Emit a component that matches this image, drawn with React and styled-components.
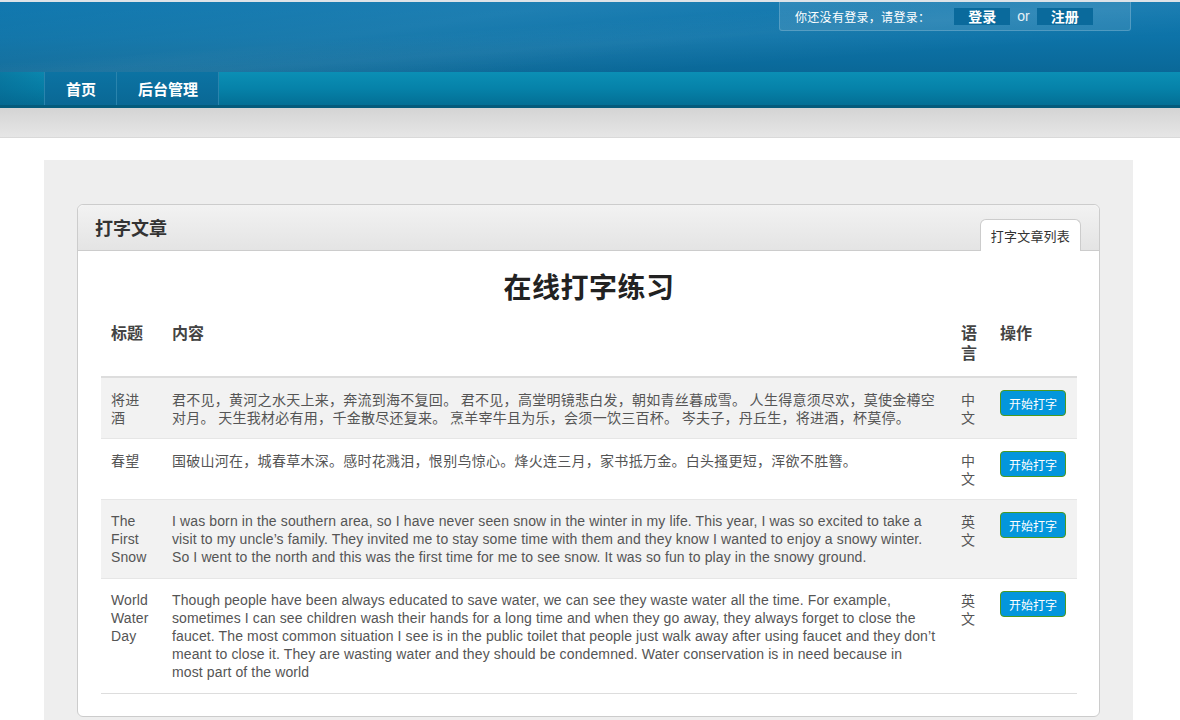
import styled, { createGlobalStyle } from "styled-components";

const GlobalStyle = createGlobalStyle`
    body {
        margin: 0;
        background: #fff;
        font-family: "Liberation Sans", Arial, "Noto Sans CJK SC", sans-serif;
        color: #555;
    }
`

const TopBar = styled.header`
    border-top: 2px solid #dde3e8;
    height: 70px;
    display: flex;
    justify-content: flex-end;
    align-items: flex-start;
    padding-right: 49px;
    background:
        linear-gradient(172deg, rgba(255,255,255,0) 0%, rgba(255,255,255,0.06) 35%, rgba(255,255,255,0) 60%),
        linear-gradient(176deg, rgba(255,255,255,0) 40%, rgba(255,255,255,0.05) 55%, rgba(255,255,255,0) 75%),
        linear-gradient(180deg, #1178af 0%, #0d73a8 50%, #0a6898 100%);
`

const LoginBox = styled.div`
    width: 352px;
    height: 29px;
    box-sizing: border-box;
    display: flex;
    align-items: center;
    padding-left: 15px;
    background: rgba(255,255,255,0.1);
    border: 1px solid rgba(255,255,255,0.18);
    border-top: none;
    border-radius: 0 0 3px 3px;
    color: #fff;
    font-size: 12px;
    font-family: "Noto Sans CJK SC", sans-serif;
`

const LoginHint = styled.span`
    margin-right: 24px;
    letter-spacing: 0.3px;
`

const LoginLink = styled.span`
    display: inline-flex;
    align-items: center;
    justify-content: center;
    width: 56px;
    height: 17px;
    background: #0a6a9c;
    font-size: 14px;
    font-weight: bold;
`

const OrText = styled.span`
    font-family: "Liberation Sans", Arial, sans-serif;
    font-size: 14px;
    margin: 0 7px;
    color: #e6f1f7;
`

const NavBar = styled.nav`
    height: 33px;
    display: flex;
    padding-left: 44px;
    border-bottom: 3px solid #045b7c;
    background:
        linear-gradient(90deg, rgba(8,96,140,0.45) 0%, rgba(8,96,140,0) 6%),
        linear-gradient(180deg, #0b8fb5 0%, #0682a9 50%, #036f95 100%);
`

const NavItem = styled.a`
    display: flex;
    align-items: center;
    padding: 0 20px 0 21px;
    color: #fff;
    font-family: "Noto Sans CJK SC", sans-serif;
    font-weight: bold;
    font-size: 15px;
    text-decoration: none;
    background: linear-gradient(180deg, #0c73a3 0%, #0a6895 100%);
    border-left: 1px solid #2a84ad;
    &:last-child {
        border-right: 1px solid #2a84ad;
    }
`

const SubBand = styled.div`
    height: 29px;
    background: linear-gradient(180deg, #d4d4d4 0%, #e6e6e6 100%);
    border-bottom: 1px solid #d9d9d9;
`

const Main = styled.main`
    margin: 22px 47px 0 44px;
    background: #eeeeee;
    padding: 44px 33px 0;
    min-height: 520px;
`

const Panel = styled.section`
    background: #fff;
    border: 1px solid #cccccc;
    border-radius: 6px;
    padding-bottom: 22px;
`

const PanelHead = styled.div`
    height: 45px;
    display: flex;
    align-items: flex-end;
    justify-content: space-between;
    padding: 0 18px 0 17px;
    border-bottom: 1px solid #cccccc;
    border-radius: 6px 6px 0 0;
    background: linear-gradient(180deg, #f2f2f2 0%, #e4e4e4 100%);
`

const PanelTitle = styled.h2`
    margin: 0 0 1px;
    align-self: center;
    font-family: "Noto Sans CJK SC", sans-serif;
    font-size: 18px;
    font-weight: bold;
    color: #333;
`

const Tab = styled.div`
    height: 32px;
    box-sizing: border-box;
    margin-bottom: -1px;
    padding: 0 10px;
    display: flex;
    align-items: center;
    background: #fff;
    border: 1px solid #cccccc;
    border-bottom: none;
    border-radius: 6px 6px 0 0;
    font-family: "Noto Sans CJK SC", sans-serif;
    font-size: 13px;
    letter-spacing: 0.2px;
    color: #333;
`

const PanelBody = styled.div`
    padding: 0 22px 0 23px;
`

const Heading = styled.h1`
    margin: 17px 0 7px;
    text-align: center;
    font-family: "Noto Sans CJK SC", sans-serif;
    font-size: 28px;
    line-height: 36px;
    font-weight: bold;
    letter-spacing: 0.5px;
    color: #222;
`

const Table = styled.table`
    width: 100%;
    border-collapse: collapse;
    font-size: 14px;
    line-height: 18px;
`

const Th = styled.th`
    text-align: left;
    vertical-align: top;
    padding: 11px 10px 14px;
    font-family: "Noto Sans CJK SC", sans-serif;
    font-size: 16px;
    line-height: 20px;
    font-weight: bold;
    color: #444;
    border-bottom: 2px solid #dddddd;
    width: ${(p) => p.$w || "auto"};
`

const Row = styled.tr`
    background: ${(p) => (p.$odd ? "#f2f2f2" : "#fff")};
    &:last-child td {
        border-bottom: 1px solid #dddddd;
    }
`

const Td = styled.td`
    vertical-align: top;
    padding: 12px ${(p) => (p.$wide ? "14.5px" : "10px")} 12px 10px;
    border-top: 1px solid #e6e6e6;
    color: #555;
    font-family: ${(p) => (p.$en ? '"Liberation Sans", Arial, sans-serif' : '"Noto Sans CJK SC", sans-serif')};
    letter-spacing: ${(p) => (p.$en ? "0.12px" : "0.27px")};
`

const StartButton = styled.button`
    width: 66px;
    height: 26px;
    padding: 0;
    border: 1px solid #4c9a1e;
    border-radius: 4px;
    background: #0396dc;
    color: #fff;
    font-family: "Noto Sans CJK SC", sans-serif;
    font-size: 12px;
    cursor: pointer;
`

const articles = [
    {
        title: "将进酒",
        text: "君不见，黄河之水天上来，奔流到海不复回。 君不见，高堂明镜悲白发，朝如青丝暮成雪。 人生得意须尽欢，莫使金樽空对月。 天生我材必有用，千金散尽还复来。 烹羊宰牛且为乐，会须一饮三百杯。 岑夫子，丹丘生，将进酒，杯莫停。",
        lang: "中文",
        en: false,
    },
    {
        title: "春望",
        text: "国破山河在，城春草木深。感时花溅泪，恨别鸟惊心。烽火连三月，家书抵万金。白头搔更短，浑欲不胜簪。",
        lang: "中文",
        en: false,
    },
    {
        title: "The First Snow",
        text: "I was born in the southern area, so I have never seen snow in the winter in my life. This year, I was so excited to take a visit to my uncle’s family. They invited me to stay some time with them and they know I wanted to enjoy a snowy winter. So I went to the north and this was the first time for me to see snow. It was so fun to play in the snowy ground.",
        lang: "英文",
        en: true,
    },
    {
        title: "World Water Day",
        text: "Though people have been always educated to save water, we can see they waste water all the time. For example, sometimes I can see children wash their hands for a long time and when they go away, they always forget to close the faucet. The most common situation I see is in the public toilet that people just walk away after using faucet and they don’t meant to close it. They are wasting water and they should be condemned. Water conservation is in need because in most part of the world",
        lang: "英文",
        en: true,
    },
]

export default function App() {
    return (
        <>
            <GlobalStyle />
            <TopBar>
                <LoginBox>
                    <LoginHint>你还没有登录，请登录：</LoginHint>
                    <LoginLink>登录</LoginLink>
                    <OrText>or</OrText>
                    <LoginLink>注册</LoginLink>
                </LoginBox>
            </TopBar>
            <NavBar>
                <NavItem href="#">首页</NavItem>
                <NavItem href="#">后台管理</NavItem>
            </NavBar>
            <SubBand />
            <Main>
                <Panel>
                    <PanelHead>
                        <PanelTitle>打字文章</PanelTitle>
                        <Tab>打字文章列表</Tab>
                    </PanelHead>
                    <PanelBody>
                        <Heading>在线打字练习</Heading>
                        <Table>
                            <thead>
                                <tr>
                                    <Th $w="41px">标题</Th>
                                    <Th>内容</Th>
                                    <Th $w="19px">语言</Th>
                                    <Th $w="67px">操作</Th>
                                </tr>
                            </thead>
                            <tbody>
                                {articles.map((a, i) => (
                                    <Row key={a.title} $odd={i % 2 === 0}>
                                        <Td $en={a.en}>{a.title}</Td>
                                        <Td $en={a.en} $wide>{a.text}</Td>
                                        <Td>{a.lang}</Td>
                                        <Td>
                                            <StartButton>开始打字</StartButton>
                                        </Td>
                                    </Row>
                                ))}
                            </tbody>
                        </Table>
                    </PanelBody>
                </Panel>
            </Main>
        </>
    )
}
